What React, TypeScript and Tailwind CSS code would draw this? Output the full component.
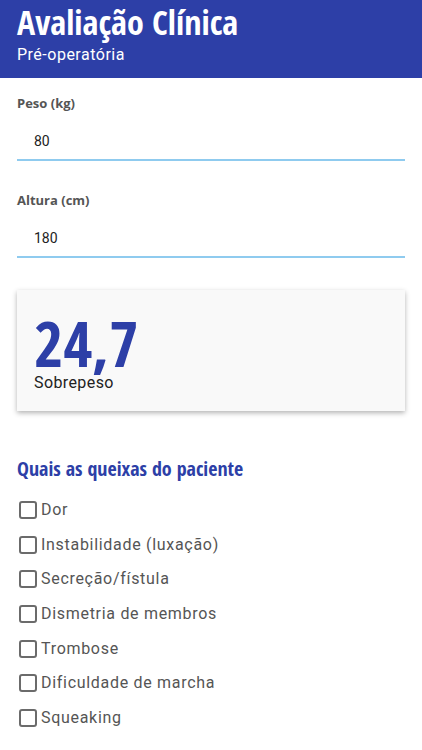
const queixas = [
  "Dor",
  "Instabilidade (luxação)",
  "Secreção/fístula",
  "Dismetria de membros",
  "Trombose",
  "Dificuldade de marcha",
  "Squeaking",
];

function Campo({ label, value }: { label: string; value: string }) {
  return (
    <div className="px-[17px]">
      <div className="h-[20px] text-[13px] leading-[20px] font-bold text-[#555]">{label}</div>
      <div className="mt-[9px] h-[39px] border-b-2 border-[#8fcbef] pl-[17px] text-[14px] leading-[38px] text-[#222] font-['Roboto',sans-serif]">
        {value}
      </div>
    </div>
  );
}

export default function App() {
  return (
    <div className="min-h-[750px] bg-white font-['Open_Sans',sans-serif]">
      <div className="h-[78px] bg-[#2d3fa7] px-[17px] pt-[4px] text-white">
        <h1 className="font-['Open_Sans_Condensed','Roboto_Condensed',sans-serif] text-[34px] font-bold leading-[36px]">
          Avaliação Clínica
        </h1>
        <div className="mt-[5px] text-[16px] leading-[20px] tracking-[0.5px] font-['Roboto',sans-serif]">Pré-operatória</div>
      </div>

      <div className="pt-[15px]">
        <Campo label="Peso (kg)" value="80" />
        <div className="h-[29px]" />
        <Campo label="Altura (cm)" value="180" />
      </div>

      <div className="mx-[17px] mt-[32px] h-[121px] bg-[#f9f9f9] px-[17px] pt-[26px] shadow-[0_2px_5px_rgba(0,0,0,0.3)]">
        <div className="font-['Open_Sans_Condensed','Roboto_Condensed',sans-serif] text-[63px] font-bold leading-[54px] text-[#2d3fa7]">
          24,7
        </div>
        <div className="mt-[3px] text-[16px] leading-[19px] text-[#222] tracking-[0.4px] font-['Roboto',sans-serif]">Sobrepeso</div>
      </div>

      <div className="px-[17px] pt-[45px]">
        <h2 className="font-['Open_Sans_Condensed','Roboto_Condensed',sans-serif] text-[20px] font-bold leading-[26px] text-[#2d3fa7]">
          Quais as queixas do paciente
        </h2>
        <ul className="mt-[11px] flex flex-col">
          {queixas.map((q) => (
            <li key={q} className="flex h-[34.6px] items-center gap-[4px] pl-[2px]">
              <span className="h-[18px] w-[18px] rounded-[3px] border-2 border-[#6b6b6b]" />
              <span className="text-[16px] tracking-[0.7px] text-[#555] font-['Roboto',sans-serif]">{q}</span>
            </li>
          ))}
        </ul>
      </div>
    </div>
  );
}
